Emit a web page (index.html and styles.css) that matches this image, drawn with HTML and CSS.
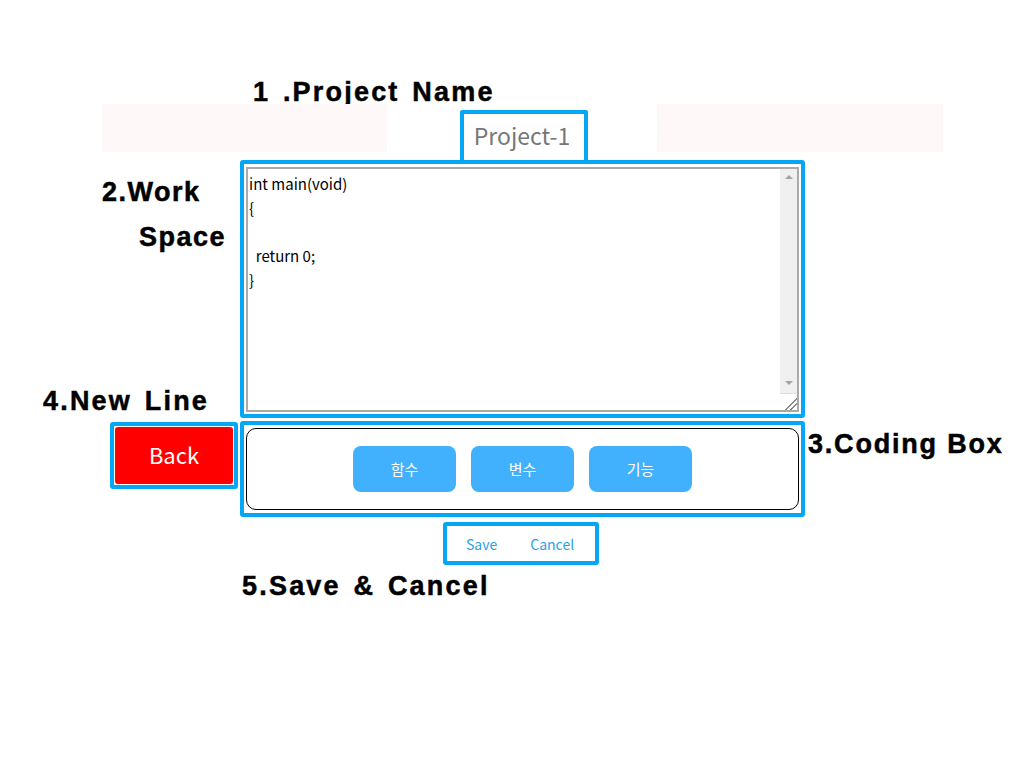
FILE: index.html
```html
<!DOCTYPE html>
<html>
<head>
	<title>Project Editor</title>
	<meta charset="utf-8">
	<link rel="stylesheet" href="styles.css">
</head>
<body>
	<div class="page">
		<!-- 1. 프로젝트 이름 -->
		<div class="title-row">
			<span class="note">1 .Project Name</span>
		</div>
		<div class="name-row">
			<div class="pink pink-left"></div>
			<div class="mark name-box">Project-1</div>
			<div class="pink pink-right"></div>
		</div>

		<!-- 2. 작업 공간 -->
		<div class="row work-row">
			<div class="side">
				<div class="note work-note">2.Work<br><span class="indent">Space</span></div>
				<div class="note line-note">4.New Line</div>
			</div>
			<div class="mark work-box">
				<div class="editor">
					<div class="code">
						<div>int main(void)</div>
						<div>{</div>
						<div>&nbsp;</div>
						<div>&nbsp; return 0;</div>
						<div>}</div>
					</div>
					<div class="scroll">
						<span class="arrow up"></span>
						<span class="track"></span>
						<span class="arrow down"></span>
						<span class="grip"></span>
					</div>
				</div>
			</div>
		</div>

		<!-- 3. 코딩 박스 -->
		<div class="row coding-row">
			<div class="side">
				<div class="mark back-wrap">
					<a class="back">Back</a>
				</div>
			</div>
			<div class="mark coding-box">
				<div class="tools">
					<a class="tool">함수</a>
					<a class="tool">변수</a>
					<a class="tool">기능</a>
				</div>
			</div>
			<div class="note coding-note">3.Coding Box</div>
		</div>

		<!-- 5. 저장 / 취소 -->
		<div class="row save-row">
			<div class="side"></div>
			<div class="save-col">
				<div class="mark save-box">
					<a class="link">Save</a>
					<a class="link">Cancel</a>
				</div>
			</div>
		</div>
		<div class="foot-row">
			<span class="note">5.Save &amp; Cancel</span>
		</div>
	</div>
</body>
</html>
```

FILE: styles.css
```css
*{
	margin: 0;
	padding: 0;
	box-sizing: border-box;
}
body{
	background: #fff;
	font-family: "Noto Sans CJK KR", "Open Sans", sans-serif;
}
.page{
	width: 1024px;
}
.note{
	font-family: "Liberation Sans", Arial, sans-serif;
	font-weight: bold;
	font-size: 27px;
	letter-spacing: 2.2px;
	word-spacing: 3px;
	line-height: 30px;
	color: #000;
	-webkit-text-stroke: 0.5px #000;
}
.mark{
	border: 4px solid #05a7f5;
	border-radius: 3px;
}

/* 1 */
.title-row{
	height: 104px;
	padding-left: 253px;
	display: flex;
	align-items: flex-end;
}
.title-row .note{
	line-height: 24px;
}
.name-row{
	height: 56px;
	display: flex;
	align-items: flex-start;
}
.pink{
	height: 48px;
	background: #fef8f8;
}
.pink-left{
	margin-left: 102px;
	width: 285px;
}
.pink-right{
	margin-left: 69px;
	width: 286px;
}
.name-box{
	margin-top: 6px;
	margin-left: 73px;
	width: 128px;
	height: 50px;
	border-bottom: 0;
	border-radius: 3px 3px 0 0;
	color: #777;
	font-size: 23px;
	text-align: center;
	line-height: 42px;
	padding-right: 4px;
}

/* 2 */
.row{
	display: grid;
	grid-template-columns: 240px 565px 1fr;
}
.work-row{
	height: 258px;
}
.side{
	display: flex;
	flex-direction: column;
	justify-content: space-between;
}
.work-note{
	margin: 10px 0 0 102px;
	line-height: 45px;
	letter-spacing: 1.5px;
	word-spacing: 0;
}
.indent{
	padding-left: 37px;
}
.line-note{
	margin: 0 0 2px 43px;
}
.work-box{
	padding: 3px 2px 2px 2px;
}
.editor{
	height: 100%;
	border: 2px solid #aaa;
	display: flex;
}
.code{
	flex: 1;
	padding: 3px 0 0 1px;
	font-size: 15px;
	line-height: 24px;
	color: #000;
}
.scroll{
	width: 17px;
	background: #f0f0f0;
	display: flex;
	flex-direction: column;
	align-items: center;
}
.arrow{
	width: 0;
	height: 0;
	border-left: 4px solid transparent;
	border-right: 4px solid transparent;
}
.up{
	margin-top: 6px;
	border-bottom: 4px solid #a3a3a3;
}
.track{
	flex: 1;
}
.down{
	margin-bottom: 8px;
	border-top: 4px solid #a3a3a3;
}
.grip{
	width: 17px;
	height: 17px;
	background: #fff linear-gradient(135deg, transparent 62%, #888 62%, #888 67%, transparent 67%, transparent 77%, #888 77%, #888 82%, transparent 82%);
	border-top: 1px solid #ddd;
}

/* 3 */
.coding-row{
	margin-top: 3px;
	height: 96px;
}
.back-wrap{
	margin: 1px 0 0 110px;
	width: 128px;
	height: 67px;
	padding: 1px;
}
.back{
	display: block;
	height: 100%;
	background: #ff0000;
	border-radius: 3px;
	color: #fff;
	font-size: 22px;
	line-height: 55px;
	text-align: center;
}
.coding-box{
	padding: 3px 2px;
}
.tools{
	height: 100%;
	border: 1px solid #000;
	border-radius: 10px;
	display: flex;
	justify-content: center;
	align-items: center;
	gap: 15px;
}
.tool{
	width: 103px;
	height: 46px;
	background: #41b1fe;
	border-radius: 8px;
	color: #fff;
	font-size: 15px;
	line-height: 46px;
	text-align: center;
}
.coding-note{
	margin: 8px 0 0 3px;
	letter-spacing: 1.8px;
	word-spacing: 0;
}

/* 5 */
.save-row{
	margin-top: 5px;
}
.save-col{
	display: flex;
	justify-content: center;
	padding-right: 3px;
}
.save-box{
	width: 156px;
	height: 43px;
	display: flex;
	align-items: center;
	padding-left: 19px;
	gap: 33px;
}
.link{
	color: #2ba2e6;
	font-size: 14px;
}
.foot-row{
	padding: 6px 0 0 242px;
}
```
